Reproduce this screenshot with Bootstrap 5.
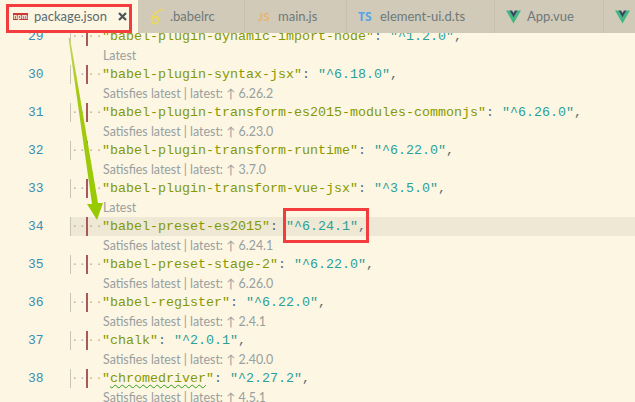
<!DOCTYPE html>
<html lang="en">
<head>
<meta charset="utf-8">
<title>package.json</title>
<link href="https://cdn.jsdelivr.net/npm/bootstrap@5.3.0/dist/css/bootstrap.min.css" rel="stylesheet">
<style>
html,body{height:100%;margin:0;overflow:hidden;background:#fdf6e3}
.shot{width:635px;height:402px;overflow:hidden;position:relative;background:#fdf6e3}
.tabbar{height:33px;background:#d2cab8;font-family:Lato,sans-serif;font-size:13px;color:#6c797b}
.tabitem{height:33px;border-right:1px solid #c8c0ae;white-space:nowrap;flex:none;overflow:hidden}
.tabitem.on{background:#fdf6e3;color:#5b6b70;width:138px;padding-left:13px;border-right:0}
.w-babel{width:107px;padding-left:12px}
.w-main{width:102px;padding-left:13px}
.w-el{width:148px;padding-left:11px}
.w-app{width:109px;padding-left:11px}
.w-next{width:31px;padding-left:11px;border-right:0}
.npmicon{background:#cb3837;color:#fff;font:bold 6.5px/7px "Liberation Sans",sans-serif;width:15px;height:7px;text-align:center;margin-right:6px;margin-top:-1px;letter-spacing:.1px}
.closer{margin-left:11px}
.slot{flex:none;display:flex;align-items:center}
.s20{width:20px}
.s21{width:21px}
.s22{width:22px}
.js-ic{color:#e8b26e;font:bold 12px Lato,sans-serif}
.ts-ic{color:#55a4e8;font:bold 12px "Open Sans",sans-serif}
.ed{height:369px;overflow:hidden;font-family:"Liberation Mono",monospace;font-size:13.34px}
.feed{margin-top:-6px}
.cl{height:19px;line-height:19px;white-space:pre;color:#586e75}
.lnum{width:70px;padding-right:26.5px;text-align:right;color:#3a8fb5;flex:none;font-size:13px}
.codearea{flex:1 1 auto;border-left:1px solid #c9c5b5}
.cl.hl .codearea{background:#eee8d5}
.ws{display:inline-block;width:7.5px;color:#a9a79a;text-align:center;font-size:10px;vertical-align:top}
.ws.wide{width:8px;text-indent:2px;text-align:left}
.ws.bar{box-shadow:inset 2px 0 0 0 #a85a5a}
.kk{color:#859900}
.vv{color:#2aa198}
.squig{text-decoration:underline wavy #2e9e14;text-decoration-thickness:1px;text-underline-offset:2px}
.lens{height:19px;line-height:19px;padding-left:103px;font-family:Lato,sans-serif;font-size:12.4px;color:#96a0a0;white-space:nowrap}
.redbox{position:absolute;border:3px solid #f33c3c}
.rb-tab{left:6px;top:4px;width:126px;height:29px}
.rb-val{left:283px;top:208px;width:86px;height:35px}
.arrowsvg{position:absolute;left:0;top:0;pointer-events:none}
</style>
</head>
<body>
<div class="shot">
  <div class="tabbar d-flex">
    <div class="tabitem on d-flex align-items-center"><span class="npmicon">npm</span><span>package.json</span>
      <svg class="closer flex-none" width="9" height="9" viewBox="0 0 9 9"><path d="M1 1l7 7M8 1l-7 7" stroke="#4a5558" stroke-width="2.2" fill="none"/></svg>
    </div>
    <div class="tabitem w-babel d-flex align-items-center">
      <span class="slot s20"><svg width="14" height="18" viewBox="0 0 14 18"><path d="M12 1.500C7 2.500 2.500 7 1.700 12c-.5 3.200 2 4.500 4.300 3.300 2.600-1.300 3.700-5.300 1-6.300-1.700-.6-3.800.8-5 3" stroke="#efd94e" stroke-width="1.400" fill="none" stroke-linecap="round"/></svg></span>
      <span>.babelrc</span>
    </div>
    <div class="tabitem w-main d-flex align-items-center"><span class="slot s20 js-ic">JS</span><span>main.js</span></div>
    <div class="tabitem w-el d-flex align-items-center"><span class="slot s22 ts-ic">TS</span><span>element-ui.d.ts</span></div>
    <div class="tabitem w-app d-flex align-items-center">
      <span class="slot s21"><svg width="15" height="14" viewBox="0 0 15 14"><path d="M0 .5h3.500L7.500 7.500 11.500.5H15L7.500 13.500z" fill="#41b883"/><path d="M3.500.5h2.600l1.400 2.500L8.900.5h2.600L7.500 7.500z" fill="#35495e"/></svg></span>
      <span>App.vue</span>
    </div>
    <div class="tabitem w-next d-flex align-items-center">
      <svg width="15" height="14" viewBox="0 0 15 14"><path d="M0 .5h3.500L7.500 7.500 11.500.5H15L7.500 13.500z" fill="#41b883"/><path d="M3.500.5h2.600l1.400 2.500L8.900.5h2.600L7.500 7.500z" fill="#35495e"/></svg>
    </div>
  </div>
  <div class="ed">
    <div class="feed">
      <div class="cl d-flex"><span class="lnum">29</span><span class="codearea"><span class="ws">·</span><span class="ws">·</span><span class="ws wide bar">·</span><span class="ws wide">·</span><span class="kk">"babel-plugin-dynamic-import-node"</span>: <span class="vv">"^1.2.0"</span>,</span></div>
      <div class="lens">Latest</div>
      <div class="cl d-flex"><span class="lnum">30</span><span class="codearea"><span class="ws">·</span><span class="ws">·</span><span class="ws wide bar">·</span><span class="ws wide">·</span><span class="kk">"babel-plugin-syntax-jsx"</span>: <span class="vv">"^6.18.0"</span>,</span></div>
      <div class="lens">Satisfies latest | latest: ↑ 6.26.2</div>
      <div class="cl d-flex"><span class="lnum">31</span><span class="codearea"><span class="ws">·</span><span class="ws">·</span><span class="ws wide bar">·</span><span class="ws wide">·</span><span class="kk">"babel-plugin-transform-es2015-modules-commonjs"</span>: <span class="vv">"^6.26.0"</span>,</span></div>
      <div class="lens">Satisfies latest | latest: ↑ 6.23.0</div>
      <div class="cl d-flex"><span class="lnum">32</span><span class="codearea"><span class="ws">·</span><span class="ws">·</span><span class="ws wide bar">·</span><span class="ws wide">·</span><span class="kk">"babel-plugin-transform-runtime"</span>: <span class="vv">"^6.22.0"</span>,</span></div>
      <div class="lens">Satisfies latest | latest: ↑ 3.7.0</div>
      <div class="cl d-flex"><span class="lnum">33</span><span class="codearea"><span class="ws">·</span><span class="ws">·</span><span class="ws wide bar">·</span><span class="ws wide">·</span><span class="kk">"babel-plugin-transform-vue-jsx"</span>: <span class="vv">"^3.5.0"</span>,</span></div>
      <div class="lens">Latest</div>
      <div class="cl hl d-flex"><span class="lnum">34</span><span class="codearea"><span class="ws">·</span><span class="ws">·</span><span class="ws wide bar">·</span><span class="ws wide">·</span><span class="kk">"babel-preset-es2015"</span>: <span class="vv">"^6.24.1"</span>,</span></div>
      <div class="lens">Satisfies latest | latest: ↑ 6.24.1</div>
      <div class="cl d-flex"><span class="lnum">35</span><span class="codearea"><span class="ws">·</span><span class="ws">·</span><span class="ws wide bar">·</span><span class="ws wide">·</span><span class="kk">"babel-preset-stage-2"</span>: <span class="vv">"^6.22.0"</span>,</span></div>
      <div class="lens">Satisfies latest | latest: ↑ 6.26.0</div>
      <div class="cl d-flex"><span class="lnum">36</span><span class="codearea"><span class="ws">·</span><span class="ws">·</span><span class="ws wide bar">·</span><span class="ws wide">·</span><span class="kk">"babel-register"</span>: <span class="vv">"^6.22.0"</span>,</span></div>
      <div class="lens">Satisfies latest | latest: ↑ 2.4.1</div>
      <div class="cl d-flex"><span class="lnum">37</span><span class="codearea"><span class="ws">·</span><span class="ws">·</span><span class="ws wide bar">·</span><span class="ws wide">·</span><span class="kk">"chalk"</span>: <span class="vv">"^2.0.1"</span>,</span></div>
      <div class="lens">Satisfies latest | latest: ↑ 2.40.0</div>
      <div class="cl d-flex"><span class="lnum">38</span><span class="codearea"><span class="ws">·</span><span class="ws">·</span><span class="ws wide bar">·</span><span class="ws wide">·</span><span class="kk">"<span class="squig">chromedriver</span>"</span>: <span class="vv">"^2.27.2"</span>,</span></div>
      <div class="lens">Satisfies latest | latest: ↑ 4.5.1</div>
    </div>
  </div>
  <svg class="arrowsvg" width="635" height="402" viewBox="0 0 635 402">
    <defs><linearGradient id="gr" x1="0" y1="0" x2="0" y2="1"><stop offset="0" stop-color="#c9d765"/><stop offset=".3" stop-color="#a5c912"/><stop offset="1" stop-color="#96ca00"/></linearGradient></defs>
    <path d="M68.500 38 L70 38 L98 203 L103 203 L97 220 L87 204 L92 204 Z" fill="url(#gr)"/>
  </svg>
  <div class="redbox rb-tab"></div>
  <div class="redbox rb-val"></div>
</div>
<script src="https://cdn.jsdelivr.net/npm/bootstrap@5.3.0/dist/js/bootstrap.bundle.min.js"></script>
</body>
</html>
